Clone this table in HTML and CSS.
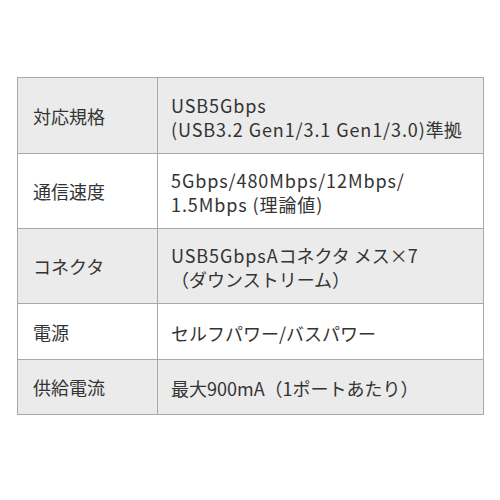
FILE: index.html
```html
<!DOCTYPE html>
<html lang="ja">
<head>
<meta charset="utf-8">
<link rel="stylesheet" href="styles.css">
</head>
<body>
<div class="page">
  <table class="spec">
    <tr class="r1 gray">
      <th>対応規格</th>
      <td><span class="lat">USB5Gbps</span><br><span class="lat">(USB3.2 Gen1/3.1 Gen1/3.0)</span>準拠</td>
    </tr>
    <tr class="r2">
      <th>通信速度</th>
      <td><span class="lat">5Gbps/480Mbps/12Mbps/</span><br><span class="lat">1.5Mbps (理論値)</span></td>
    </tr>
    <tr class="r3 gray">
      <th>コネクタ</th>
      <td><span class="lat">USB5GbpsA</span>コネクタ メス×7<br>（ダウンストリーム）</td>
    </tr>
    <tr class="r4">
      <th>電源</th>
      <td>セルフパワー/バスパワー</td>
    </tr>
    <tr class="r5 gray">
      <th>供給電流</th>
      <td>最大900mA（1ポートあたり）</td>
    </tr>
  </table>
</div>
</body>
</html>
```
FILE: styles.css
```css
html, body {
  margin: 0;
  padding: 0;
  background: #ffffff;
}
.page {
  width: 500px;
  height: 500px;
  padding: 77px 0 0 17px;
  box-sizing: border-box;
}
.spec {
  border-collapse: collapse;
  width: 467px;
  font-family: "Noto Sans CJK JP", "Noto Sans", sans-serif;
  font-size: 18px;
  line-height: 24px;
  color: #333333;
}
.spec th, .spec td {
  border: 1px solid #a9a9a9;
  padding: 0;
  text-align: left;
  font-weight: normal;
  vertical-align: middle;
}
.spec th {
  width: 124px;
  padding-left: 15px;
}
.spec td {
  padding-left: 13px;
  padding-top: 2px;
}
.lat {
  letter-spacing: 0.9px;
}
.gray th, .gray td {
  background: #ebebeb;
}
.r1 { height: 76px; }
.r2 { height: 75px; }
.r3 { height: 75px; }
.r4 { height: 56px; }
.r5 { height: 55px; }
```
